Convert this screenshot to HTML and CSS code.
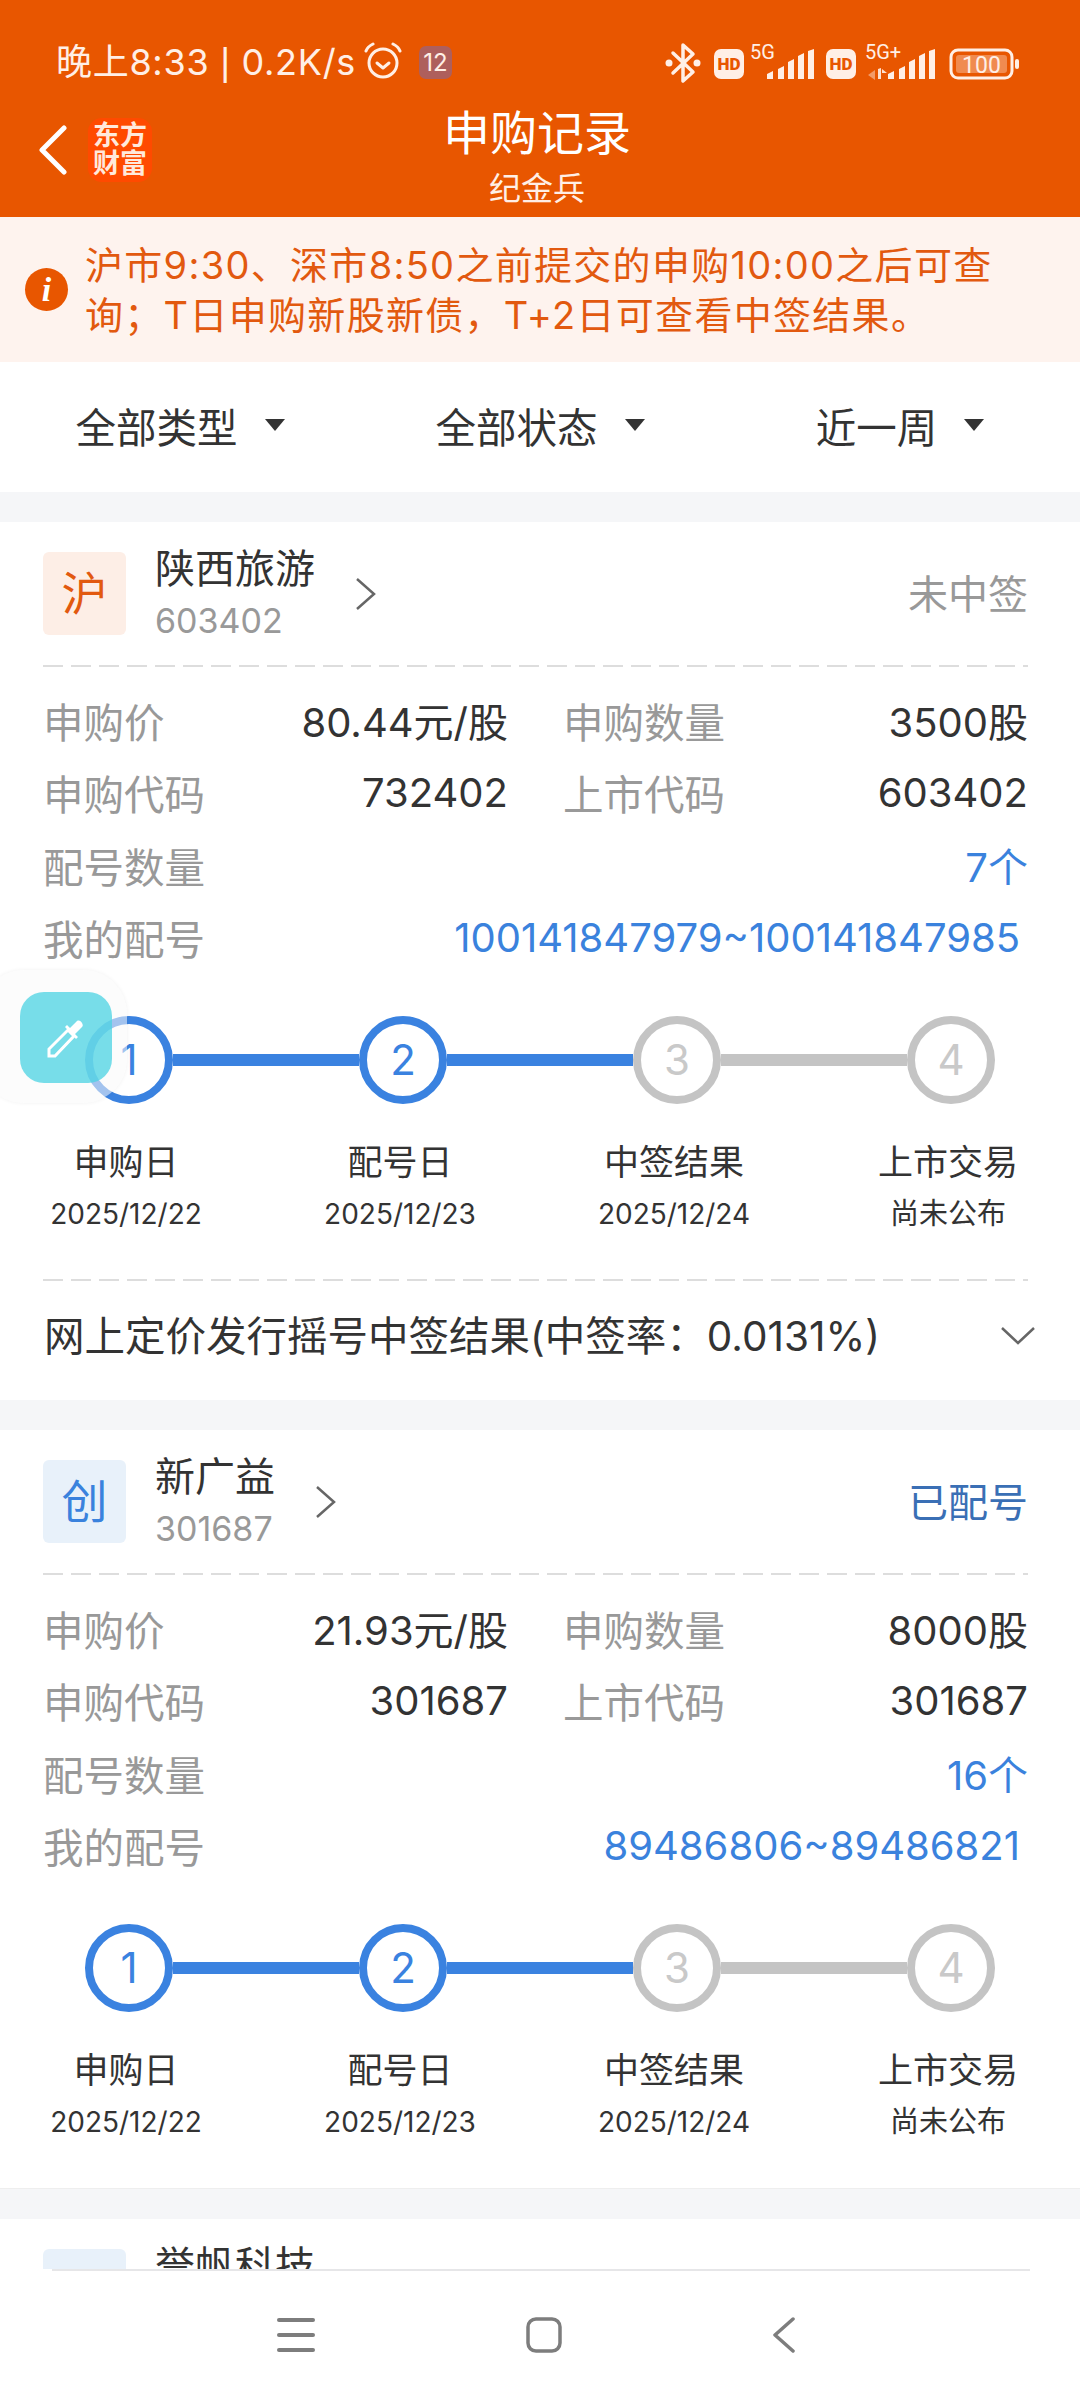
FILE: index.html
```html
<!DOCTYPE html>
<html lang="zh-CN">
<head>
    <meta charset="UTF-8">
    <title>申购记录</title>
    <link rel="stylesheet" href="styles.css">
</head>
<body>
<div class="page">
    <!-- 顶部 -->
    <header class="top">
        <div class="status">
            <div class="status-left">
                <span class="status-text">晚上8:33 <span class="pipe">|</span> 0.2K/s</span>
                <svg class="alarm" viewBox="0 0 40 38" width="40" height="38" fill="none" stroke="#ffefe6" stroke-width="3" stroke-linecap="round" stroke-linejoin="round">
                    <circle cx="20" cy="21" r="14"/>
                    <path d="M14 21l6 5 6-5"/>
                    <path d="M3 9c1-3 3-5 7-7"/>
                    <path d="M37 9c-1-3-3-5-7-7"/>
                </svg>
                <span class="sim-badge">12</span>
            </div>
            <svg class="status-right" viewBox="660 40 360 46" width="360" height="46">
                <g fill="none" stroke="#ffefe6" stroke-width="3.5" stroke-linejoin="round" stroke-linecap="round">
                    <path d="M673 54l20 19-10 9V46l10 9-20 19"/>
                </g>
                <g fill="#ffefe6">
                    <circle cx="669" cy="64" r="3.5"/>
                    <circle cx="697" cy="64" r="3.5"/>
                    <rect x="714" y="50" width="30" height="30" rx="7"/>
                    <rect x="826" y="50" width="30" height="30" rx="7"/>
                    <path d="M767 80v-5l6-3v8zM778 80V70l6-3v13zM788 80V63l6-3v20zM798 80V57l6-3v26zM808 80V52l6-2v30z"/>
                    <path d="M888 80v-5l6-3v8zM899 80V70l6-3v13zM909 80V63l6-3v20zM919 80V57l6-3v26zM929 80V52l6-2v30z"/>
                    <path d="M878 70l3-1v11h-3zM882 70l5 4h-5z" opacity=".9"/>
                    <path d="M875 71v10l-7-5z" opacity=".45"/>
                    <rect x="1015" y="60" width="4" height="10" rx="2"/>
                </g>
                <g fill="#e85600" font-family="Roboto, sans-serif" font-weight="900" font-size="17" text-anchor="middle">
                    <text x="729" y="71">HD</text>
                    <text x="841" y="71">HD</text>
                </g>
                <g fill="#ffefe6" font-family="Roboto, sans-serif" font-size="20">
                    <text x="750" y="60">5G</text>
                    <text x="865" y="60">5G+</text>
                </g>
                <rect x="951" y="51" width="61" height="28" rx="7" fill="none" stroke="#ffefe6" stroke-width="3"/>
                <rect x="956" y="56" width="51" height="18" rx="3" fill="#ffefe6" opacity=".35"/>
                <text x="981.500" y="74" fill="#ffefe6" font-family="Roboto, sans-serif" font-size="23" text-anchor="middle">100</text>
            </svg>
        </div>
        <div class="title-bar">
            <div class="title-left">
                <svg class="back" viewBox="0 0 30 50" width="30" height="50" fill="none" stroke="#fff" stroke-width="5" stroke-linecap="round" stroke-linejoin="round">
                    <path d="M26 3L4 25l22 22"/>
                </svg>
                <div class="logo">东方财富</div>
            </div>
            <div class="title-mid">
                <div class="title">申购记录</div>
                <div class="subtitle">纪金兵</div>
            </div>
        </div>
    </header>

    <div class="notice">
        <span class="notice-icon">i</span>
        <p class="notice-text">沪市9:30、深市8:50之前提交的申购10:00之后可查询；T日申购新股新债，T+2日可查看中签结果。</p>
    </div>

    <div class="filters">
        <div class="filter">全部类型<i class="caret"></i></div>
        <div class="filter">全部状态<i class="caret"></i></div>
        <div class="filter">近一周<i class="caret"></i></div>
    </div>

    <!-- 陕西旅游 -->
    <section class="card">
        <div class="card-head">
            <span class="market market-sh">沪</span>
            <div class="stock">
                <div class="stock-name">陕西旅游</div>
                <div class="stock-code">603402</div>
            </div>
            <svg class="more" viewBox="0 0 22 34" width="22" height="34" fill="none" stroke="#666" stroke-width="2.500"><path d="M2 2l17 15L2 32"/></svg>
            <span class="state state-gray">未中签</span>
        </div>
        <div class="dash"></div>
        <div class="info">
            <div class="pair">
                <div class="cell"><span class="label">申购价</span><span class="val">80.44元/股</span></div>
                <div class="cell"><span class="label">申购数量</span><span class="val">3500股</span></div>
            </div>
            <div class="pair">
                <div class="cell"><span class="label">申购代码</span><span class="val">732402</span></div>
                <div class="cell"><span class="label">上市代码</span><span class="val">603402</span></div>
            </div>
            <div class="cell"><span class="label">配号数量</span><span class="val blue">7个</span></div>
            <div class="cell"><span class="label">我的配号</span><span class="val blue nums">100141847979~100141847985</span></div>
        </div>
        <div class="track">
            <span class="dot on">1</span><span class="bar on"></span>
            <span class="dot on">2</span><span class="bar on"></span>
            <span class="dot">3</span><span class="bar"></span>
            <span class="dot">4</span>
        </div>
        <div class="steps">
            <div class="step"><div class="step-name">申购日</div><div class="step-date">2025/12/22</div></div>
            <div class="step"><div class="step-name">配号日</div><div class="step-date">2025/12/23</div></div>
            <div class="step"><div class="step-name">中签结果</div><div class="step-date">2025/12/24</div></div>
            <div class="step"><div class="step-name">上市交易</div><div class="step-date pending">尚未公布</div></div>
        </div>
        <div class="dash dash-low"></div>
        <div class="result">
            <span class="result-text">网上定价发行摇号中签结果(中签率：0.0131%)</span>
            <svg viewBox="0 0 34 20" width="34" height="20" fill="none" stroke="#666" stroke-width="2.500"><path d="M1 2l16 15L33 2"/></svg>
        </div>
    </section>

    <!-- 新广益 -->
    <section class="card card-short">
        <div class="card-head">
            <span class="market market-cy">创</span>
            <div class="stock">
                <div class="stock-name">新广益</div>
                <div class="stock-code">301687</div>
            </div>
            <svg class="more" viewBox="0 0 22 34" width="22" height="34" fill="none" stroke="#666" stroke-width="2.500"><path d="M2 2l17 15L2 32"/></svg>
            <span class="state state-blue">已配号</span>
        </div>
        <div class="dash"></div>
        <div class="info">
            <div class="pair">
                <div class="cell"><span class="label">申购价</span><span class="val">21.93元/股</span></div>
                <div class="cell"><span class="label">申购数量</span><span class="val">8000股</span></div>
            </div>
            <div class="pair">
                <div class="cell"><span class="label">申购代码</span><span class="val">301687</span></div>
                <div class="cell"><span class="label">上市代码</span><span class="val">301687</span></div>
            </div>
            <div class="cell"><span class="label">配号数量</span><span class="val blue">16个</span></div>
            <div class="cell"><span class="label">我的配号</span><span class="val blue nums">89486806~89486821</span></div>
        </div>
        <div class="track">
            <span class="dot on">1</span><span class="bar on"></span>
            <span class="dot on">2</span><span class="bar on"></span>
            <span class="dot">3</span><span class="bar"></span>
            <span class="dot">4</span>
        </div>
        <div class="steps">
            <div class="step"><div class="step-name">申购日</div><div class="step-date">2025/12/22</div></div>
            <div class="step"><div class="step-name">配号日</div><div class="step-date">2025/12/23</div></div>
            <div class="step"><div class="step-name">中签结果</div><div class="step-date">2025/12/24</div></div>
            <div class="step"><div class="step-name">上市交易</div><div class="step-date pending">尚未公布</div></div>
        </div>
    </section>

    <!-- 第三条,被底栏盖住 -->
    <section class="card">
        <div class="card-head">
            <span class="market market-cy"></span>
            <div class="stock">
                <div class="stock-name">誉帆科技</div>
            </div>
        </div>
    </section>

    <!-- 悬浮取色按钮 -->
    <div class="float-panel">
        <div class="float-btn">
            <svg viewBox="0 0 40 40" width="40" height="40" fill="#fff">
                <path d="M3 38v-7L22 12l6 6L9 38z" fill="none" stroke="#fff" stroke-width="3"/>
                <path d="M19 9l2-2 3 3 7-7c2-1 4 0 5 2s1 3 0 4l-7 7 3 3-2 2z"/>
            </svg>
        </div>
    </div>

    <!-- 系统导航 -->
    <nav class="sys-nav">
        <div class="sys-line"></div>
        <div class="sys-icons">
            <svg viewBox="0 0 38 34" width="38" height="34" fill="#7d7d7d"><rect y="0" width="38" height="4" rx="2"/><rect y="15" width="38" height="4" rx="2"/><rect y="30" width="38" height="4" rx="2"/></svg>
            <svg viewBox="0 0 36 36" width="36" height="36" fill="none" stroke="#7d7d7d" stroke-width="3.500"><rect x="2" y="2" width="32" height="32" rx="8"/></svg>
            <svg viewBox="0 0 24 36" width="24" height="36" fill="none" stroke="#7d7d7d" stroke-width="3.500" stroke-linecap="round" stroke-linejoin="round"><path d="M21 2L3 18l18 16"/></svg>
        </div>
    </nav>
</div>
</body>
</html>
```

FILE: styles.css
```css
* {
    box-sizing: border-box;
}

body {
    margin: 0;
    background-color: #f5f6f8;
    font-family: Inter, "Noto Sans CJK SC", sans-serif;
    color: #333;
}

.page {
    position: relative;
    width: 1080px;
    height: 2400px;
    overflow: hidden;
}

/* 顶部 */
.top {
    height: 217px;
    background-color: #e85600;
    color: #fff;
}

.status {
    display: flex;
    justify-content: space-between;
    align-items: center;
    height: 100px;
    padding: 24px 60px 0 56px;
}

.status-left {
    display: flex;
    align-items: center;
}

.status-text {
    font-size: 36px;
    line-height: 44px;
    letter-spacing: 0.700px;
    color: #ffefe6;
}

.pipe {
    font-family: "Liberation Sans", sans-serif;
    font-size: 38px;
    line-height: 40px;
}

.alarm {
    margin-left: 7px;
    margin-top: -3px;
}

.sim-badge {
    width: 33px;
    height: 33px;
    margin-left: 16px;
    border-radius: 7px;
    background-color: #ae5f5c;
    color: #ffefe6;
    font-size: 24px;
    line-height: 33px;
    text-align: center;
}

.title-bar {
    display: grid;
    grid-template-columns: 1fr auto 1fr;
    height: 117px;
}

.title-left {
    display: flex;
    align-items: center;
    height: 100px;
    padding-left: 38px;
}

.logo {
    flex: none;
    width: 64px;
    height: 64px;
    margin-left: 20px;
    padding: 4px 4px 0;
    border-radius: 14px;
    background-color: #ff4a00;
    color: #ffe9dc;
    font-size: 27px;
    font-weight: 700;
    line-height: 28px;
    text-align: center;
}

.title-mid {
    padding-right: 6px;
    text-align: center;
}

.title {
    margin-top: 3px;
    font-size: 47px;
    line-height: 60px;
}

.subtitle {
    margin-top: 4px;
    font-size: 32px;
    line-height: 44px;
    color: #ffefe6;
}

/* 提示 */
.notice {
    display: flex;
    align-items: center;
    height: 145px;
    padding-left: 25px;
    background-color: #fef3ee;
    color: #e2590f;
}

.notice-icon {
    flex: none;
    width: 43px;
    height: 43px;
    border-radius: 50%;
    background-color: #e85600;
    color: #fff;
    font-family: "Liberation Serif", serif;
    font-size: 34px;
    font-style: italic;
    font-weight: 700;
    line-height: 43px;
    text-align: center;
}

.notice-text {
    width: 930px;
    margin: 0 0 0 17px;
    font-size: 38px;
    line-height: 50px;
    letter-spacing: 1.300px;
}

/* 筛选 */
.filters {
    display: grid;
    grid-template-columns: repeat(3, 1fr);
    height: 130px;
    padding-bottom: 4px;
    background-color: #fff;
}

.filter {
    display: flex;
    justify-content: center;
    align-items: center;
    font-size: 40.500px;
}

.caret {
    width: 0;
    height: 0;
    margin-left: 27px;
    border-top: 12px solid #333;
    border-left: 10px solid transparent;
    border-right: 10px solid transparent;
}

/* 卡片 */
.card {
    margin-top: 30px;
    padding: 30px 52px 0 43px;
    background-color: #fff;
}

.card-short {
    height: 759px;
    border-bottom: 1px solid #eee;
}

.card-head {
    display: flex;
    align-items: center;
    height: 83px;
}

.market {
    flex: none;
    width: 83px;
    height: 83px;
    border-radius: 6px;
    font-size: 46px;
    line-height: 83px;
    text-align: center;
}

.market-sh {
    background-color: #fdeee6;
    color: #e2590f;
}

.market-cy {
    background-color: #e8f1fa;
    color: #3a82dd;
}

.stock {
    height: 96px;
    margin: -1px 0 0 29px;
}

.stock-name {
    font-size: 40px;
    line-height: 48px;
}

.stock-code {
    margin-top: 7px;
    font-size: 34px;
    line-height: 42px;
    color: #999;
}

.more {
    margin-left: 40px;
}

.state {
    margin: -3px 0 0 auto;
    font-size: 40px;
}

.state-gray {
    color: #999;
}

.state-blue {
    color: #3a6fb5;
}

.dash {
    height: 2px;
    margin-top: 30px;
    background-image: repeating-linear-gradient(90deg, #ddd 0, #ddd 20px, transparent 20px, transparent 28px);
}

.dash-low {
    margin-top: 45px;
}

.info {
    padding-top: 17px;
}

.pair {
    display: grid;
    grid-template-columns: 465px 465px;
    column-gap: 55px;
}

.cell {
    display: flex;
    justify-content: space-between;
    align-items: center;
    height: 72.500px;
    font-size: 40px;
}

.label {
    font-size: 40.500px;
    color: #999;
}

.blue {
    color: #3a82dd;
}

.nums {
    margin-right: 8px;
}

/* 进度 */
.track {
    display: flex;
    align-items: center;
    margin-top: 42px;
    padding-left: 42px;
}

.dot {
    flex: none;
    width: 88px;
    height: 88px;
    border: 8px solid #c4c4c4;
    border-radius: 50%;
    color: #c9c9c9;
    font-size: 42px;
    line-height: 72px;
    text-align: center;
}

.dot.on {
    border-color: #3a82e0;
    color: #3a82e0;
}

.bar {
    flex: none;
    width: 186px;
    height: 12px;
    background-color: #c4c4c4;
}

.bar.on {
    background-color: #3a82e0;
}

.steps {
    display: flex;
    gap: 74px;
    margin-top: 38px;
    margin-left: -17px;
}

.step {
    flex: none;
    width: 200px;
    text-align: center;
}

.step-name {
    font-size: 35px;
    line-height: 40px;
}

.step-date {
    margin-top: 12px;
    font-size: 28px;
    line-height: 40px;
}

.pending {
    font-size: 29px;
}

.result {
    display: flex;
    justify-content: space-between;
    align-items: center;
    height: 119px;
    padding: 0 0 9px 1px;
    margin-right: -7px;
    font-size: 40.500px;
}

.result-text {
    margin-bottom: 6px;
}

/* 悬浮按钮 */
.float-panel {
    position: absolute;
    left: -20px;
    top: 970px;
    width: 147px;
    height: 133px;
    padding: 22px 0 0 40px;
    border-radius: 44px;
    background-color: rgba(250, 250, 250, 0.55);
    box-shadow: 0 0 4px rgba(0, 0, 0, 0.06);
}

.float-btn {
    display: flex;
    justify-content: center;
    align-items: center;
    width: 92px;
    height: 91px;
    border-radius: 24px;
    background-color: rgba(75, 211, 227, 0.75);
}

/* 系统导航 */
.sys-nav {
    position: absolute;
    left: 0;
    right: 0;
    top: 2269px;
    bottom: 0;
    background-color: #fff;
}

.sys-line {
    height: 2px;
    margin: 0 50px 0 52px;
    background-color: #e6e6e8;
}

.sys-icons {
    display: flex;
    align-items: center;
    justify-content: space-between;
    height: 128px;
    padding: 0 284px 0 277px;
}
```
